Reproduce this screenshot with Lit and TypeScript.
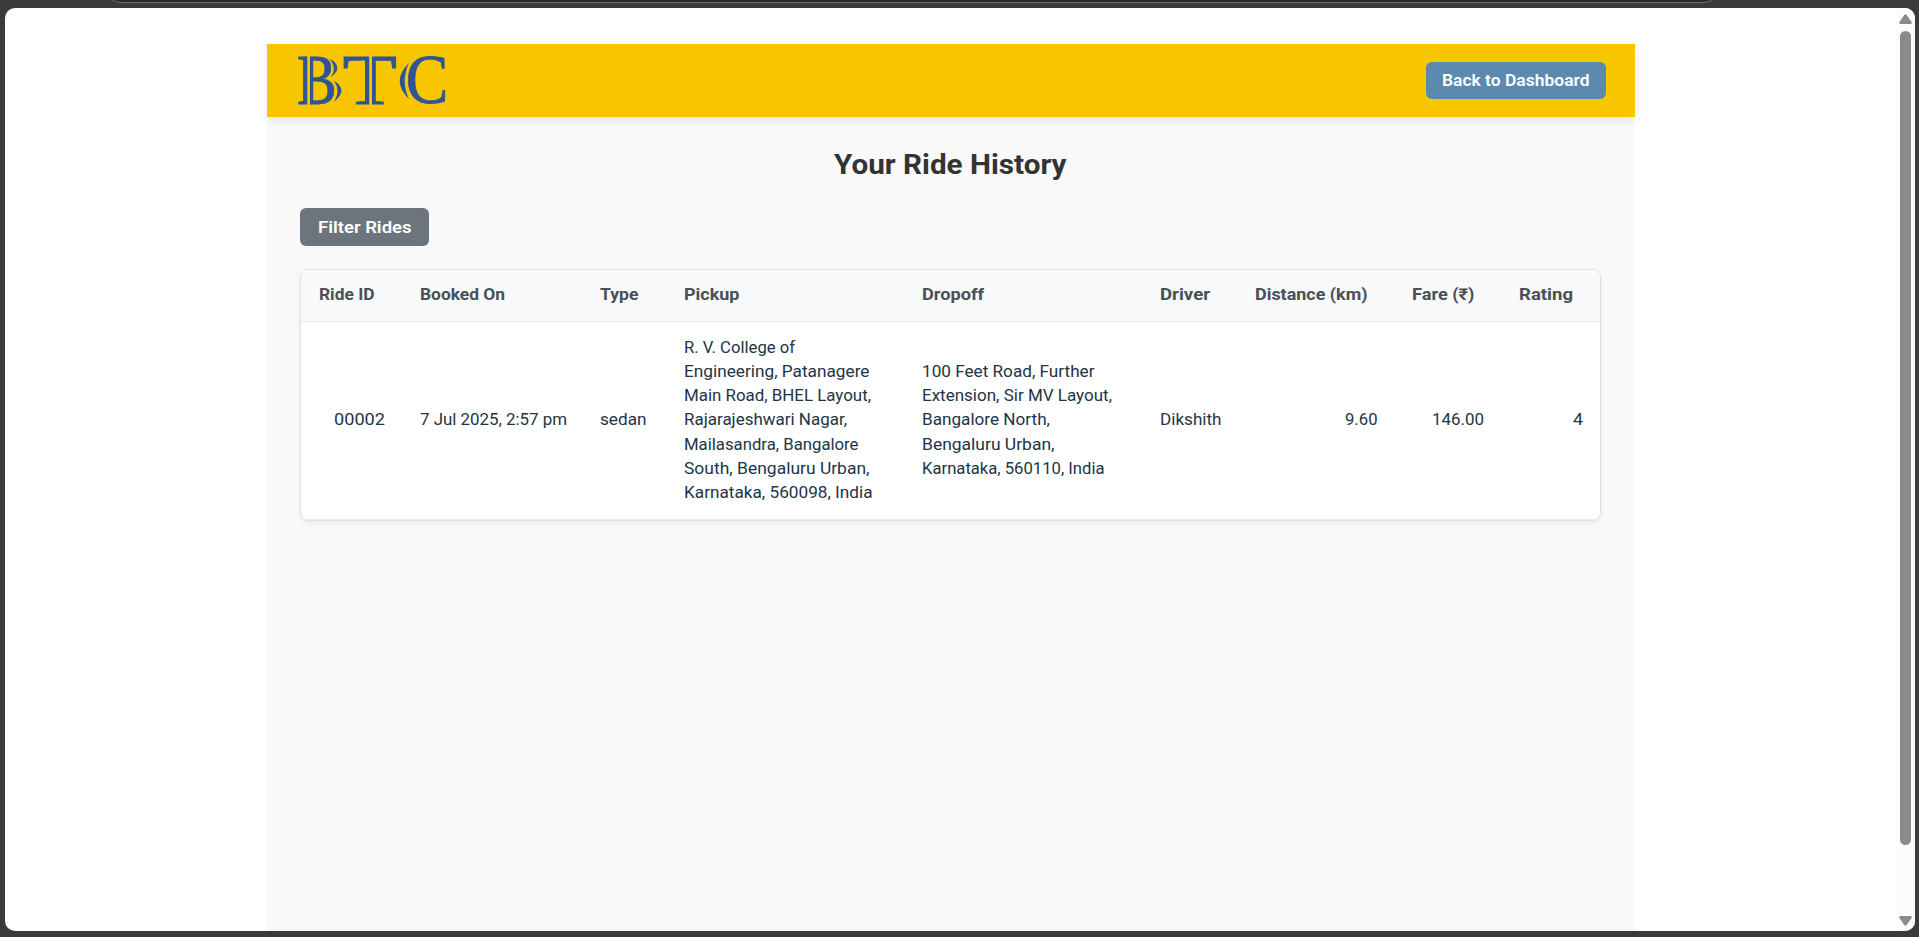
import { LitElement, html, svg, css } from "lit";
import { customElement, property } from "lit/decorators.js";

type Line = [text: string, width: number];

interface Column {
  label: Line;
  lines: Line[];
  numeric?: boolean;
}

const columns: Column[] = [
  { label: ["Ride ID", 55.5], lines: [["00002", 51]], numeric: true },
  { label: ["Booked On", 85], lines: [["7 Jul 2025, 2:57 pm", 147]] },
  { label: ["Type", 38.5], lines: [["sedan", 46.5]] },
  {
    label: ["Pickup", 55.5],
    lines: [
      ["R. V. College of", 111],
      ["Engineering, Patanagere", 185.5],
      ["Main Road, BHEL Layout,", 187],
      ["Rajarajeshwari Nagar,", 163],
      ["Mailasandra, Bangalore", 174.5],
      ["South, Bengaluru Urban,", 185.5],
      ["Karnataka, 560098, India", 188.5],
    ],
  },
  {
    label: ["Dropoff", 62],
    lines: [
      ["100 Feet Road, Further", 172.5],
      ["Extension, Sir MV Layout,", 190],
      ["Bangalore North,", 128],
      ["Bengaluru Urban,", 132.5],
      ["Karnataka, 560110, India", 182.5],
    ],
  },
  { label: ["Driver", 50], lines: [["Dikshith", 61.5]] },
  { label: ["Distance (km)", 112.5], lines: [["9.60", 32.5]], numeric: true },
  { label: ["Fare (₹)", 62.5], lines: [["146.00", 52]], numeric: true },
  { label: ["Rating", 54], lines: [["4", 10]], numeric: true },
];

/** A single line of text widened to a given width. */
@customElement("fit-text")
class FitText extends LitElement {
  @property() text = "";
  @property({ type: Number }) width = 0;

  static styles = css`
    :host { display: inline-block; white-space: pre; text-align: left; }
    span { display: inline-block; transform-origin: 0 50%; }
  `;

  render() {
    return html`<span>${this.text}</span>`;
  }

  updated() {
    const span = this.renderRoot.querySelector("span")!;
    span.style.transform = "none";
    const natural = span.getBoundingClientRect().width;
    span.style.transform = `scaleX(${this.width / natural})`;
    this.style.width = `${this.width}px`;
  }
}

const fit = ([text, width]: Line) => html`<fit-text .text=${text} .width=${width}></fit-text>`;

const logo = svg`
  <g fill="#2f5597" stroke="#2f5597" stroke-width=".8" font-family="Liberation Serif, serif" font-size="71">
    <text transform="translate(-1 47.600) scale(.84 1)">B</text>
    <text transform="translate(44.600 47.600) scale(1.26 1)">T</text>
    <text transform="translate(107.800 47) scale(.9 .97)">C</text>
  </g>
  <g fill="#2f5597">
    <path d="M31.500 2.500 Q46.500 11 33 21 Q39.500 12 31.500 2.500Z" />
    <path d="M35.500 24.500 Q51.500 34 35.500 46 Q43.500 35 35.500 24.500Z" />
    <path d="M111 7 Q92.500 25 111 43 Q102.500 25 111 7Z" />
    <rect x="5.300" y="1.500" width="4" height="45.500" />
    <rect x="12" y="1.500" width="3.200" height="45.500" />
    <rect x="67.200" y="1.500" width="4" height="45.500" />
    <rect x="74" y="1.500" width="3.800" height="45.500" />
  </g>
  <g fill="#f7c600">
    <rect x="9.300" y="0" width="2.700" height="49" />
    <rect x="71.200" y="0" width="2.800" height="49" />
  </g>
`;

@customElement("app-root")
class AppRoot extends LitElement {
  static styles = css`
    * { box-sizing: border-box; }
    :host {
      display: block;
      height: 937px;
      padding: 8px 4px 6px 5px;
      background: #3b3b3b;
      position: relative;
      overflow: hidden;
      font-family: Roboto, "Liberation Sans", sans-serif;
      font-size: 16.2px;
      line-height: 24.27px;
      color: #213547;
    }
    .omnibox {
      position: absolute;
      top: -30px;
      left: 105px;
      width: 1615px;
      height: 33px;
      border: 1px solid #6b6b6b;
      border-radius: 16px;
      background: #292929;
    }
    .taskbar {
      position: absolute;
      left: 0; right: 0; bottom: 0;
      height: 2px;
      background: #2b2a22;
    }
    .window {
      height: 923px;
      display: flex;
      background: #fff;
      border-radius: 10px;
      overflow: hidden;
      position: relative;
    }
    .viewport { flex: 1; padding: 36px 261px 0 262px; overflow: hidden; }
    .scrollbar {
      width: 19px;
      background: #fcfcfc;
      display: flex;
      flex-direction: column;
      align-items: center;
      padding: 6px 0 5px;
    }
    .scrollbar svg { width: 13px; height: 10px; fill: #8b8b8b; flex: none; }
    .thumb { width: 11px; height: 814px; margin: 7px 0 auto; border-radius: 6px; background: #8b8b8b; }
    .page { height: 1100px; background: #f9f9f9; }
    .header {
      height: 73px;
      display: flex;
      align-items: center;
      justify-content: space-between;
      padding: 0 29px 0 31px;
      background: #f7c600;
      box-shadow: 0 2px 9px rgba(0, 0, 0, .1);
    }
    .logo { width: 152px; height: 50px; overflow: visible; display: block; }
    .button {
      display: flex;
      align-items: center;
      justify-content: center;
      border: 0;
      border-radius: 6px;
      padding: 0;
      color: #fff;
      font: 600 16.2px/20px Roboto, sans-serif;
    }
    .back { width: 180px; height: 37px; background: #5b8aae; }
    .filter { width: 129px; height: 38px; padding-top: 2px; background: #6c757d; }
    .content { padding: 32px 34px 0 33px; }
    .title {
      margin: 0 0 26px;
      text-align: center;
      font-size: 27.3px;
      line-height: 33px;
      font-weight: 700;
      color: #333;
    }
    .card {
      margin-top: 23px;
      height: 252px;
      border: 1px solid #dee2e6;
      border-radius: 8px;
      background: #fff;
      box-shadow: 0 2px 5px rgba(0, 0, 0, .06);
      overflow: hidden;
    }
    .row {
      display: grid;
      grid-template-columns: 101px 180px 84px 238px 238px 95px 157px 107px 99px;
      align-items: center;
      border-bottom: 1px solid #e9ecef;
    }
    .head { height: 52px; background: #f8f9fb; color: #495057; font-weight: 700; }
    .body { height: 198px; }
    .cell { padding: 0 17px 0 17.5px; display: flex; flex-direction: column; align-items: flex-start; }
    .numeric { align-items: flex-end; }
  `;

  render() {
    return html`
      <div class="omnibox"></div>
      <div class="taskbar"></div>
      <div class="window">
        <div class="viewport">
          <div class="page">
            <header class="header">
              <svg class="logo" viewBox="0 0 152 50" role="img" aria-label="BTC">${logo}</svg>
              <button class="button back">${fit(["Back to Dashboard", 147.5])}</button>
            </header>
            <main class="content">
              <h1 class="title">${fit(["Your Ride History", 232.5])}</h1>
              <button class="button filter">${fit(["Filter Rides", 93.5])}</button>
              <section class="card">
                <div class="row head">
                  ${columns.map((c) => html`<div class="cell">${fit(c.label)}</div>`)}
                </div>
                <div class="row body">
                  ${columns.map(
                    (c) => html`<div class="cell ${c.numeric ? "numeric" : ""}">${c.lines.map(fit)}</div>`,
                  )}
                </div>
              </section>
            </main>
          </div>
        </div>
        <div class="scrollbar">
          <svg viewBox="0 0 13 10"><path d="M5.300 1Q6.500-.5 7.700 1L12.600 8Q13.200 10 11.500 10H1.500Q-.2 10 .4 8Z" /></svg>
          <div class="thumb"></div>
          <svg viewBox="0 0 13 10"><path d="M5.300 9Q6.500 10.500 7.700 9L12.600 2Q13.200 0 11.500 0H1.500Q-.2 0 .4 2Z" /></svg>
        </div>
      </div>
    `;
  }
}
